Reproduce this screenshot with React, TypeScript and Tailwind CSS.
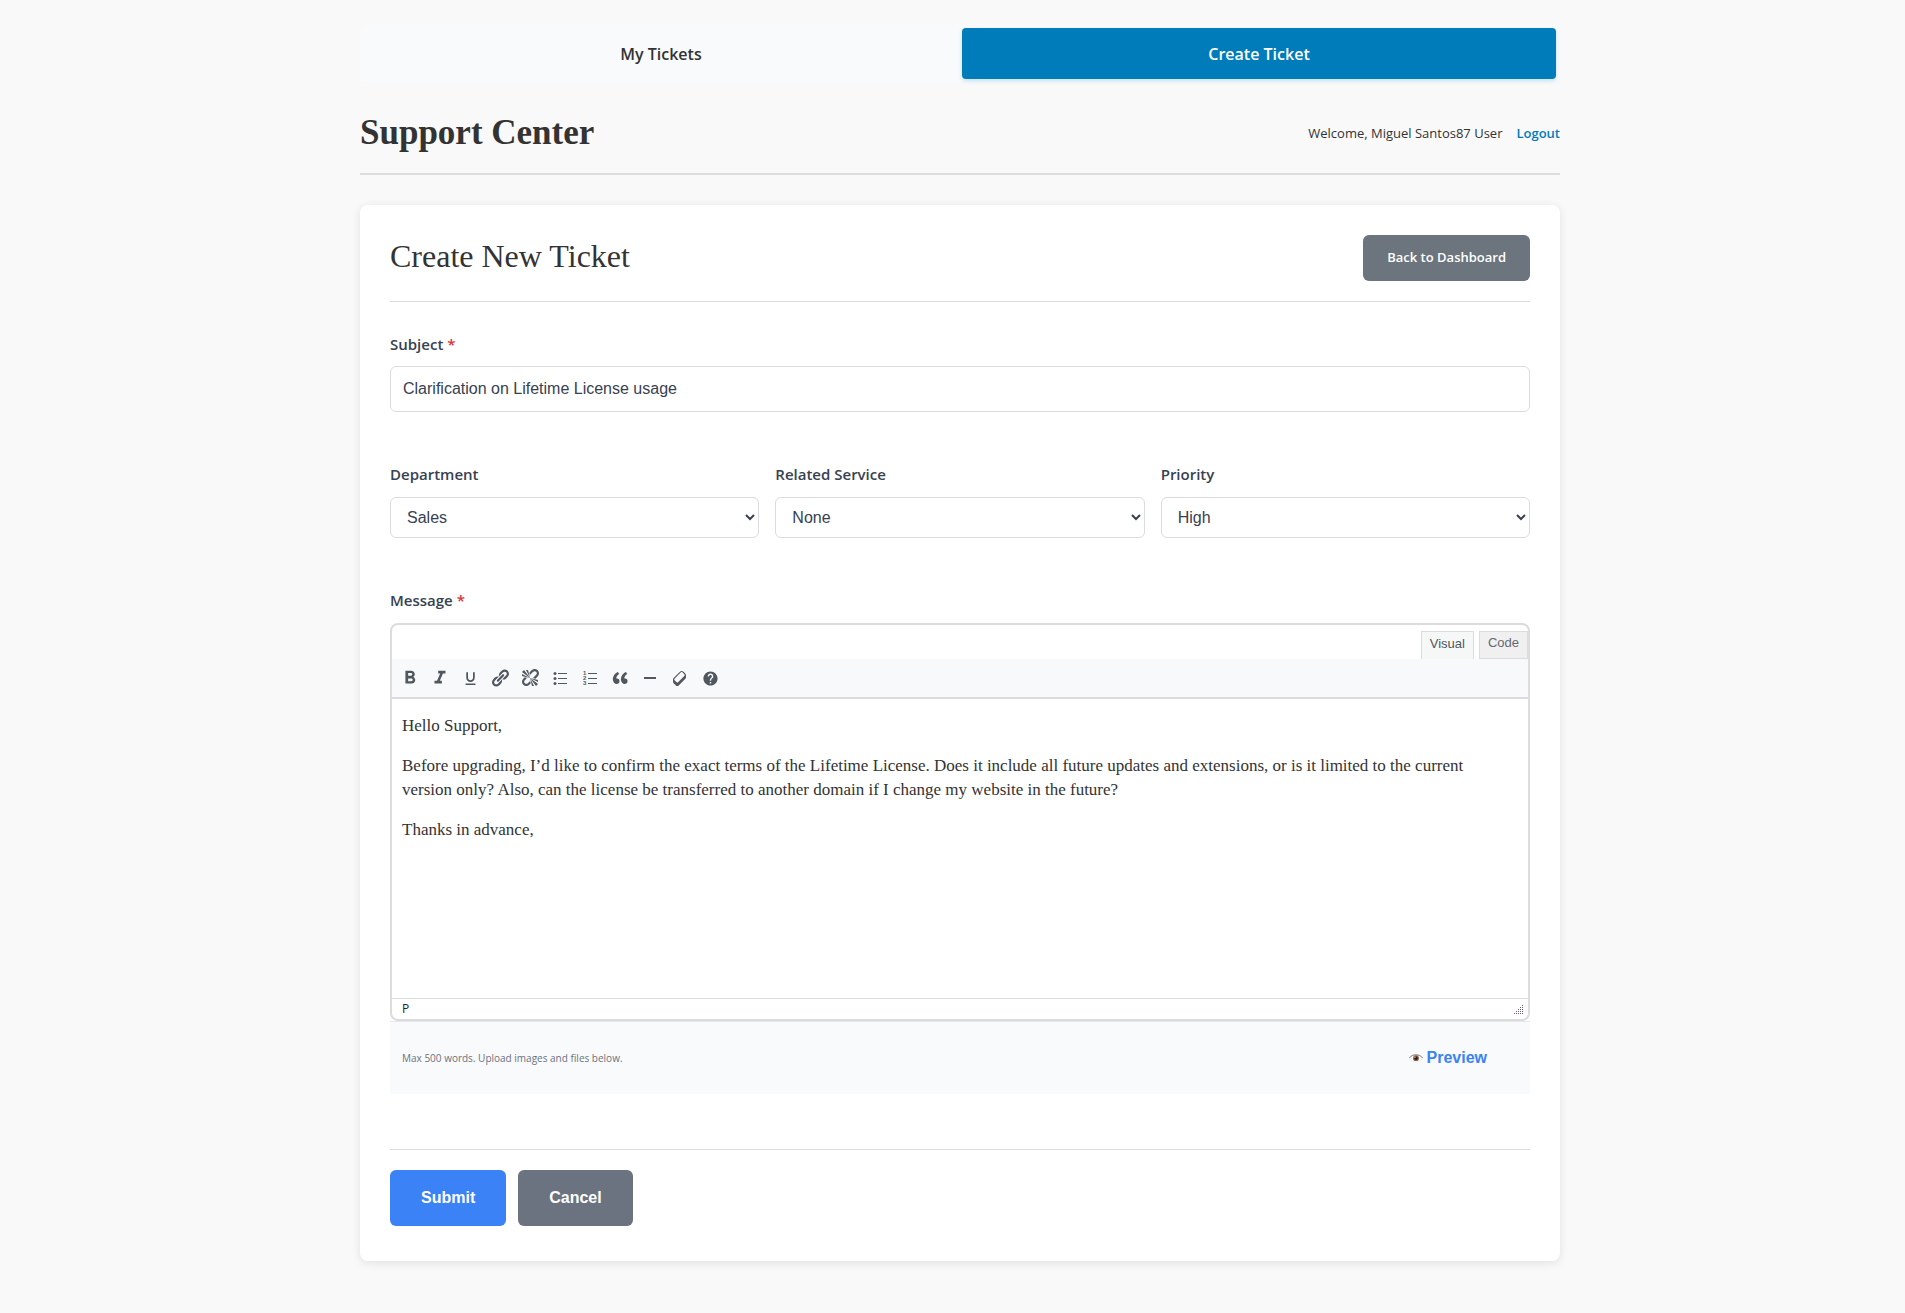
import { useState, type ReactNode } from 'react';
import { MdFormatBold, MdFormatItalic, MdFormatUnderlined, MdHelp } from 'react-icons/md';

interface SelectFieldProps {
  id: string;
  label: string;
  options: string[];
  initial: string;
}

interface ToolButtonProps {
  title: string;
  children: ReactNode;
}

function SelectField({ id, label, options, initial }: SelectFieldProps) {
  const [value, setValue] = useState(initial);

  return (
    <div>
      <label htmlFor={id} className="block text-[15px] leading-6 font-semibold text-[#374151]">
        {label}
      </label>
      <select
        id={id}
        value={value}
        onChange={(e) => setValue(e.target.value)}
        className="mt-[11px] block h-[41px] w-full rounded-md border border-[#dcdcde] bg-white px-3 font-['Liberation_Sans',sans-serif] text-base text-[#374151]"
      >
        {options.map((option) => (
          <option key={option}>{option}</option>
        ))}
      </select>
    </div>
  );
}

function ToolButton({ title, children }: ToolButtonProps) {
  return (
    <button type="button" title={title} className="flex size-[26px] items-center justify-center text-[#50575e]">
      {children}
    </button>
  );
}

function Glyph({ d }: { d: string }) {
  return (
    <svg width={20} height={20} viewBox="0 0 20 20" fill="currentColor" aria-hidden="true">
      <path d={d} />
    </svg>
  );
}

const linkPath =
  'M17.74 2.76c1.68 1.69 1.68 4.41 0 6.1l-1.53 1.52c-1.12 1.12-2.7 1.47-4.14 1.09l2.62-2.61.76-.77.76-.76c.84-.84.84-2.2 0-3.04-.84-.85-2.2-.85-3.04 0l-.77.76-3.38 3.38c-.37-1.44-.02-3.02 1.1-4.14l1.52-1.53c1.69-1.68 4.42-1.68 6.1 0zM8.59 13.43l5.34-5.34c.42-.42.42-1.1 0-1.52-.44-.43-1.13-.39-1.53 0l-5.33 5.34c-.42.42-.42 1.1 0 1.52.44.43 1.13.39 1.52 0zm-.76 2.29l4.14-4.15c.38 1.44.03 3.02-1.09 4.14l-1.52 1.53c-1.69 1.68-4.41 1.68-6.1 0-1.68-1.68-1.68-4.42 0-6.1l1.53-1.52c1.12-1.12 2.7-1.47 4.14-1.1l-4.14 4.15c-.85.84-.85 2.2 0 3.05.84.84 2.2.84 3.04 0z';
const unlinkPath =
  'M17.74 2.26c1.68 1.69 1.68 4.41 0 6.1l-1.53 1.52c-.32.33-.69.58-1.08.77L13 10l1.69-1.64.76-.77.76-.76c.84-.84.84-2.2 0-3.04-.84-.85-2.2-.85-3.04 0l-.77.76-.76.76L10 7l-.65-2.14c.19-.38.44-.75.77-1.07l1.52-1.53c1.69-1.68 4.42-1.68 6.1 0zM2 4l8 6-6-8zm4-2l4 8-2-8H6zM2 6l8 4-8-2V6zm7.36 7.69L10 13l.74 2.35-1.38 1.39c-1.69 1.68-4.41 1.68-6.1 0-1.68-1.68-1.68-4.42 0-6.1l1.39-1.38L7 10l-.69.64-1.52 1.53c-.85.84-.85 2.2 0 3.04.84.85 2.2.85 3.04 0zM18 16l-8-6 6 8zm-4 2l-4-8 2 8h2zm4-4l-8-4 8 2v2z';
const quotePath =
  'M9.49 13.22c0-.74-.2-1.38-.61-1.9-.62-.78-1.83-.88-2.53-.72-.29-1.65 1.11-3.75 2.92-4.65L7.88 4c-2.73 1.3-5.42 4.28-4.96 8.05C3.21 14.43 4.59 16 6.54 16c.85 0 1.56-.25 2.12-.75s.83-1.18.83-2.03zm8.05 0c0-.74-.2-1.38-.61-1.9-.63-.78-1.83-.88-2.53-.72-.29-1.65 1.11-3.75 2.92-4.65L15.93 4c-2.73 1.3-5.41 4.28-4.95 8.05.29 2.38 1.66 3.95 3.61 3.95.85 0 1.56-.25 2.12-.75s.83-1.18.83-2.03z';
const eraserPath =
  'M14.29 4.59l1.1 1.11c.41.4.61.94.61 1.47v2.12c0 .53-.2 1.07-.61 1.47l-6.63 6.63c-.4.41-.94.61-1.47.61s-1.07-.2-1.47-.61l-1.11-1.1-1.1-1.11c-.41-.4-.61-.94-.61-1.47v-2.12c0-.54.2-1.07.61-1.48l6.63-6.62c.4-.41.94-.61 1.47-.61s1.06.2 1.47.61zm-6.21 9.7l6.42-6.42c.39-.39.39-1.03 0-1.43L12.36 4.3c-.19-.19-.45-.29-.72-.29s-.52.1-.71.29l-6.42 6.42c-.39.4-.39 1.04 0 1.43l2.14 2.14c.38.38 1.04.38 1.43 0z';

function BulletListIcon() {
  return (
    <svg width={20} height={20} viewBox="0 0 20 20" fill="currentColor" aria-hidden="true">
      <circle cx="5" cy="5.5" r="1.5" />
      <circle cx="5" cy="10.5" r="1.5" />
      <circle cx="5" cy="15.5" r="1.5" />
      <path d="M8 5h9v1H8zM8 10h9v1H8zM8 15h9v1H8z" />
    </svg>
  );
}

function NumberListIcon() {
  return (
    <svg width={20} height={20} viewBox="0 0 20 20" fill="currentColor" aria-hidden="true">
      <g fontSize="6" fontWeight="bold" fontFamily="Liberation Sans, sans-serif">
        <text x="3" y="7">1</text>
        <text x="3" y="12">2</text>
        <text x="3" y="17">3</text>
      </g>
      <path d="M8 5h9v1H8zM8 10h9v1H8zM8 15h9v1H8z" />
    </svg>
  );
}

function EyeIcon() {
  return (
    <svg width={14} height={10} viewBox="0 0 14 10" aria-hidden="true">
      <path d="M.5 5.500C3 1 11 1 13.500 5.500C11 10 3 10 .5 5.500z" fill="#fff" stroke="#dcdcdc" strokeWidth=".5" />
      <path d="M.3 5C3 .7 11 .7 13.700 5" fill="none" stroke="#777" strokeWidth=".9" />
      <circle cx="7" cy="5.200" r="2.900" fill="#8b5a3c" />
      <circle cx="7" cy="5.200" r="1.600" fill="#2b1a1a" />
      <circle cx="6" cy="4.200" r=".6" fill="#fff" />
    </svg>
  );
}

function ResizeGrip() {
  const dots: [number, number][] = [];
  for (let row = 0; row < 5; row++) {
    for (let col = 4 - row; col < 5; col++) dots.push([col * 2, row * 2]);
  }

  return (
    <svg width={10} height={10} viewBox="0 0 10 10" fill="#6f6272" aria-hidden="true">
      {dots.map(([x, y]) => (
        <rect key={`${x}-${y}`} x={x} y={y} width="1" height="1" />
      ))}
    </svg>
  );
}

function Editor() {
  const [mode, setMode] = useState('visual');

  return (
    <div className="overflow-hidden rounded-lg border-2 border-[#dcdcde] bg-white">
      <div className="flex h-[34px] items-end justify-end gap-[5px] font-['Liberation_Sans',sans-serif] text-[13px] text-[#646970]">
        <button
          type="button"
          onClick={() => setMode('visual')}
          aria-pressed={mode === 'visual'}
          className="h-7 border border-b-0 border-[#dcdcde] bg-[#f6f7f7] px-2 pb-1 text-[#50575e]"
        >
          Visual
        </button>
        <button
          type="button"
          onClick={() => setMode('code')}
          aria-pressed={mode === 'code'}
          className="h-7 border border-[#dcdcde] bg-[#f0f0f1] px-2 pb-1"
        >
          Code
        </button>
      </div>

      <div className="flex h-10 items-center gap-1 border-b-2 border-[#dcdcde] bg-[#f8f9fb] px-[5px]">
        <ToolButton title="Bold">
          <MdFormatBold size={22} />
        </ToolButton>
        <ToolButton title="Italic">
          <MdFormatItalic size={22} />
        </ToolButton>
        <ToolButton title="Underline">
          <MdFormatUnderlined size={17} />
        </ToolButton>
        <ToolButton title="Insert link">
          <Glyph d={linkPath} />
        </ToolButton>
        <ToolButton title="Remove link">
          <Glyph d={unlinkPath} />
        </ToolButton>
        <ToolButton title="Bulleted list">
          <BulletListIcon />
        </ToolButton>
        <ToolButton title="Numbered list">
          <NumberListIcon />
        </ToolButton>
        <ToolButton title="Blockquote">
          <Glyph d={quotePath} />
        </ToolButton>
        <ToolButton title="Horizontal line">
          <Glyph d="M4 9h12v2H4z" />
        </ToolButton>
        <ToolButton title="Clear formatting">
          <Glyph d={eraserPath} />
        </ToolButton>
        <ToolButton title="Keyboard shortcuts">
          <MdHelp size={17} />
        </ToolButton>
      </div>

      <div
        contentEditable
        suppressContentEditableWarning
        role="textbox"
        aria-multiline="true"
        aria-labelledby="message-label"
        className="min-h-[299px] space-y-4 pt-[15px] pr-8 pl-[10px] font-['Liberation_Serif',serif] text-[17px] leading-6 text-[#333]"
      >
        <p>Hello Support,</p>
        <p>
          Before upgrading, I’d like to confirm the exact terms of the Lifetime License. Does it include all future
          updates and extensions, or is it limited to the current version only? Also, can the license be transferred to
          another domain if I change my website in the future?
        </p>
        <p>Thanks in advance,</p>
      </div>

      <div className="flex h-[21px] items-end justify-between border-t border-[#dcdcde] pr-1 pb-1 pl-[10px] text-xs leading-none text-[#1d2327]">
        <span>P</span>
        <ResizeGrip />
      </div>
    </div>
  );
}

export default function App() {
  const [subject, setSubject] = useState('Clarification on Lifetime License usage');

  return (
    <div className="min-h-screen bg-[#f9f9f9] pt-6 pr-6 pb-[52px] pl-[39px] font-['Open_Sans',sans-serif] text-[#333]">
      <div className="mx-auto max-w-[1200px]">
        {/* Tabs */}
        <nav className="flex gap-1 rounded-lg bg-[#f8fafc] p-1 text-base font-semibold">
          <a href="#tickets" className="flex h-[51px] flex-1 items-center justify-center rounded">
            My Tickets
          </a>
          <a
            href="#create"
            className="flex h-[51px] flex-1 items-center justify-center rounded bg-[#007cba] text-white shadow-[0_2px_4px_rgba(0,124,186,0.2)]"
          >
            Create Ticket
          </a>
        </nav>

        {/* Header */}
        <header className="mt-5 flex h-[72px] items-start justify-between border-b-2 border-[#ddd] pt-[10px]">
          <h1 className="font-['Liberation_Serif',serif] text-[35px] leading-10 font-bold">Support Center</h1>
          <div className="flex gap-[14px] pt-[10px] text-[13px] leading-5">
            <span>Welcome, Miguel Santos87 User</span>
            <a href="#logout" className="font-semibold text-[#007cba]">
              Logout
            </a>
          </div>
        </header>

        {/* Ticket form */}
        <main className="mt-[30px] rounded-lg bg-white px-[30px] pt-[30px] pb-[35px] shadow-[0_2px_10px_rgba(0,0,0,0.1)]">
          <div className="flex items-start justify-between border-b border-[#ddd] pb-5">
            <h2 className="font-['Liberation_Serif',serif] text-[32px] leading-[42px]">Create New Ticket</h2>
            <a
              href="#dashboard"
              className="flex h-[46px] items-center rounded-md bg-[#6c757d] px-6 text-[13px] font-semibold text-white"
            >
              Back to Dashboard
            </a>
          </div>

          <form onSubmit={(e) => e.preventDefault()}>
            <div className="mt-[30px]">
              <label htmlFor="subject" className="block text-[15px] leading-6 font-semibold text-[#374151]">
                Subject <span className="text-[#dc3232]">*</span>
              </label>
              <input
                id="subject"
                type="text"
                value={subject}
                onChange={(e) => setSubject(e.target.value)}
                className="mt-[10px] block h-[46px] w-full rounded-md border border-[#dcdcde] bg-white px-3 font-['Liberation_Sans',sans-serif] text-base text-[#374151]"
              />
            </div>

            <div className="mt-[50px] grid grid-cols-3 gap-4">
              <SelectField
                id="department"
                label="Department"
                options={['Sales', 'Support', 'Billing']}
                initial="Sales"
              />
              <SelectField id="service" label="Related Service" options={['None']} initial="None" />
              <SelectField id="priority" label="Priority" options={['Low', 'Medium', 'High']} initial="High" />
            </div>

            <div className="mt-[50px]">
              <div id="message-label" className="mb-[11px] text-[15px] leading-6 font-semibold text-[#374151]">
                Message <span className="text-[#dc3232]">*</span>
              </div>
              <Editor />
              <div className="flex h-[73px] items-center justify-between border-t border-[#e5e7eb] bg-[#f8fafc] pr-[43px] pl-3">
                <span className="text-[10px] text-[#6b7280]">Max 500 words. Upload images and files below.</span>
                <button
                  type="button"
                  className="flex items-center gap-1 font-['Liberation_Sans',sans-serif] text-base font-bold text-[#3b82f6]"
                >
                  <EyeIcon />
                  Preview
                </button>
              </div>
            </div>

            <div className="mt-[55px] flex gap-3 border-t border-[#dcdcde] pt-5 font-['Liberation_Sans',sans-serif] text-base font-bold text-white">
              <button type="submit" className="h-14 rounded-md bg-[#3b82f6] px-[31px]">
                Submit
              </button>
              <button type="button" className="h-14 rounded-md bg-[#6b7280] px-[31px]">
                Cancel
              </button>
            </div>
          </form>
        </main>
      </div>
    </div>
  );
}
